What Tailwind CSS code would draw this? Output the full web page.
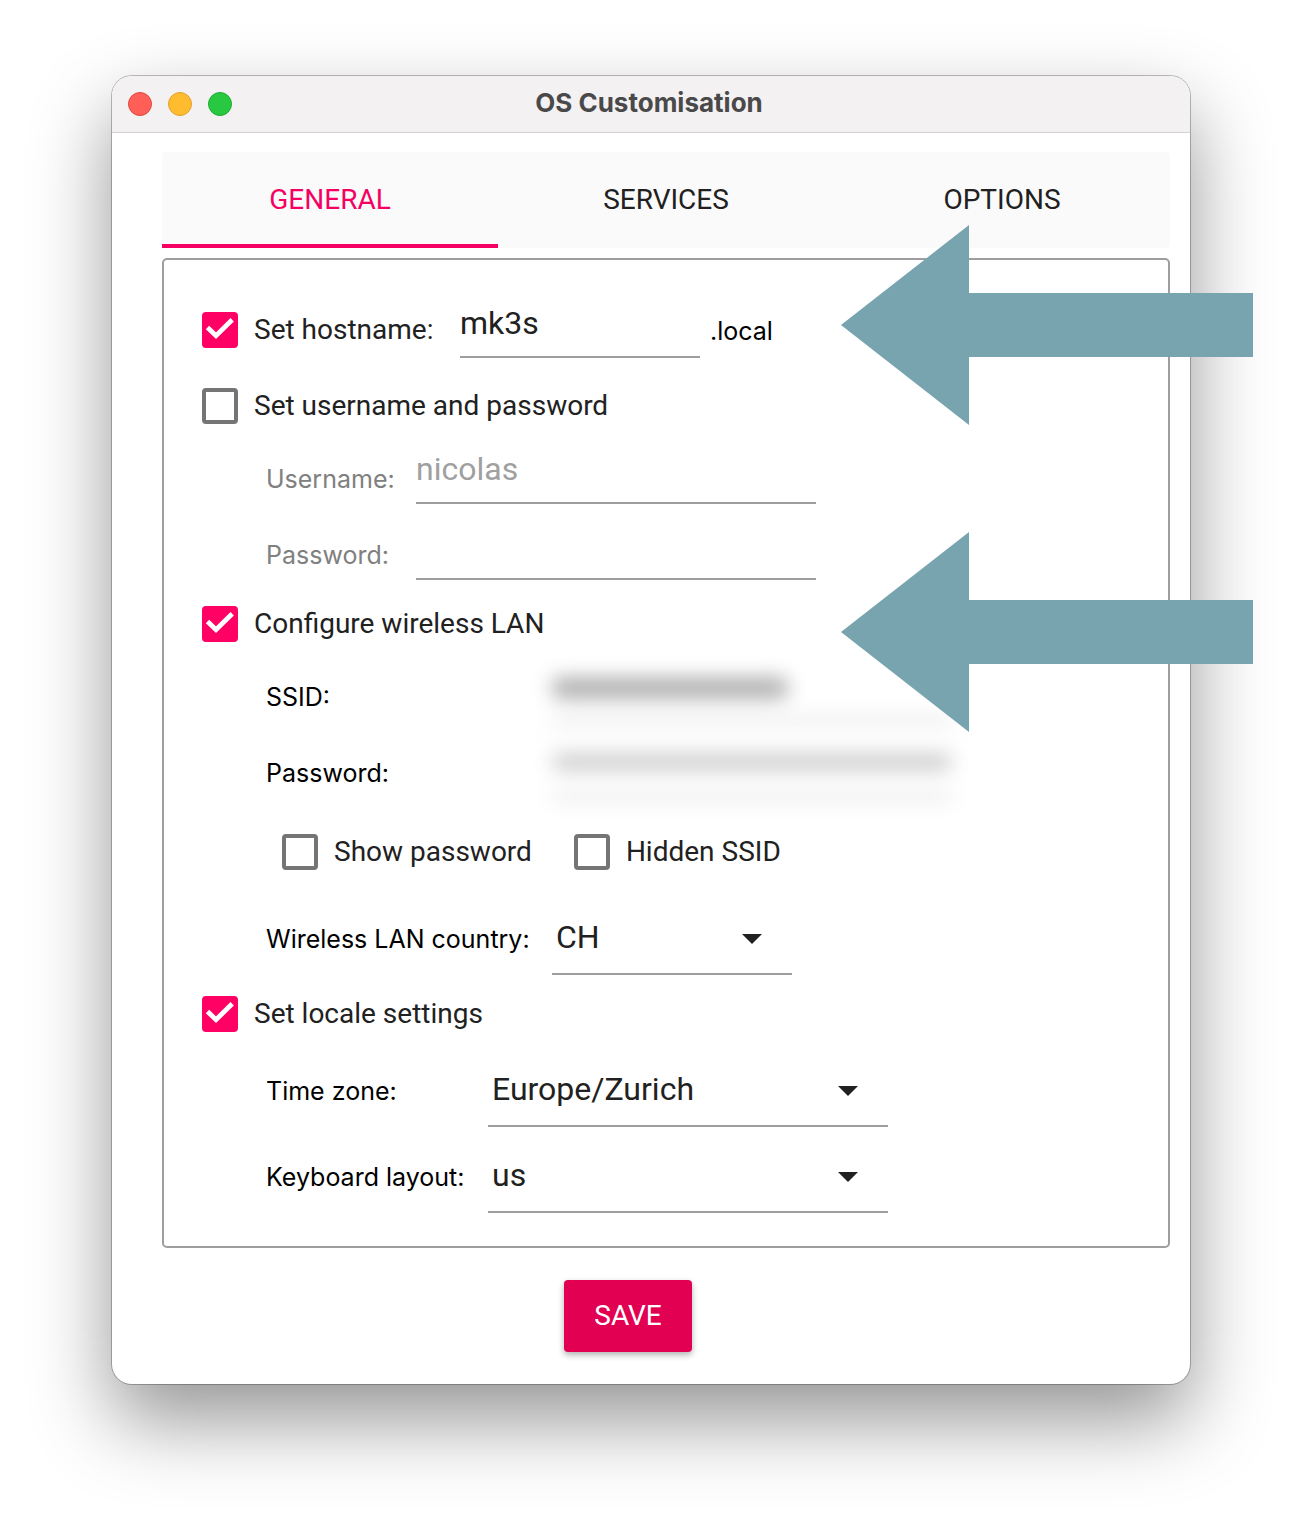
<!DOCTYPE html>
<html lang="en">
<head>
    <meta charset="UTF-8">
    <meta name="viewport" content="width=device-width, initial-scale=1.0">
    <title>OS Customisation</title>
    <script src="https://cdn.jsdelivr.net/npm/@tailwindcss/browser@4"></script>
</head>
<body class="bg-white font-[Roboto,sans-serif] text-[28px] leading-9 text-[#212121]">

    <div class="min-h-screen px-28 pt-[76px] pb-[148px]">
        <div class="relative rounded-[20px] bg-white shadow-[0_0_0_1px_rgba(0,0,0,0.25),0_36px_80px_rgba(0,0,0,0.42)]">

            <!-- Title bar -->
            <header class="relative flex h-[57px] items-center justify-center rounded-t-[20px] border-b border-[#d4d2d3] bg-[#f3f1f2]">
                <div class="absolute left-4 flex gap-4">
                    <button aria-label="Close" class="size-6 rounded-full border border-[#e2463f] bg-[#ff5f57]"></button>
                    <button aria-label="Minimise" class="size-6 rounded-full border border-[#e0a12c] bg-[#febc2e]"></button>
                    <button aria-label="Zoom" class="size-6 rounded-full border border-[#1fab33] bg-[#28c840]"></button>
                </div>
                <h1 class="pr-1 pb-0.5 font-[Inter,sans-serif] text-[26px] font-bold text-[#4a494a]">OS Customisation</h1>
            </header>

            <form class="pt-[19px] pr-5 pb-8 pl-[50px]" onsubmit="return false">
                <!-- Tabs -->
                <div role="tablist" class="grid h-24 grid-cols-3 rounded-sm bg-[#fafafa]">
                    <button type="button" role="tab" aria-selected="true" class="border-y-4 border-t-transparent border-b-[#f50062] text-[#f50062]">GENERAL</button>
                    <button type="button" role="tab" aria-selected="false">SERVICES</button>
                    <button type="button" role="tab" aria-selected="false">OPTIONS</button>
                </div>

                <div role="tabpanel" class="mt-[10px] rounded-[5px] border-2 border-[#9e9e9e] pt-[42px] pb-[33px] pl-[38px]">
                    <!-- Hostname -->
                    <div class="flex h-14 items-center">
                        <label class="flex w-[258px] items-center gap-4">
                            <span class="grid">
                                <input type="checkbox" checked class="peer col-start-1 row-start-1 size-9 appearance-none rounded-sm border-4 border-[#757575] checked:border-[#ff0064] checked:bg-[#ff0064]">
                                <svg class="pointer-events-none invisible col-start-1 row-start-1 size-9 peer-checked:visible" viewBox="0 0 36 36" fill="none" stroke="#fff" stroke-width="4.8"><path d="M5.5 15.500 14 23.700 30.200 7.800"/></svg>
                            </span>
                            Set hostname:
                        </label>
                        <input id="hostname" type="text" value="mk3s" aria-label="Hostname" class="h-14 w-60 border-b-2 border-[#9e9e9e] pb-3 text-[32px] outline-none">
                        <label for="hostname" class="ml-[10px] pt-0.5 font-[Inter,sans-serif] text-[25px] text-black">.local</label>
                    </div>

                    <!-- Username and password -->
                    <label class="mt-[30px] flex w-fit items-center gap-4">
                        <span class="grid">
                            <input type="checkbox" class="peer col-start-1 row-start-1 size-9 appearance-none rounded-sm border-4 border-[#757575] checked:border-[#ff0064] checked:bg-[#ff0064]">
                            <svg class="pointer-events-none invisible col-start-1 row-start-1 size-9 peer-checked:visible" viewBox="0 0 36 36" fill="none" stroke="#fff" stroke-width="4.8"><path d="M5.5 15.500 14 23.700 30.200 7.800"/></svg>
                        </span>
                        Set username and password
                    </label>
                    <div class="mt-6 ml-16 flex h-14 items-center">
                        <label for="username" class="w-[150px] pt-1.5 font-[Inter,sans-serif] text-[25px] text-[#808080]">Username:</label>
                        <input id="username" type="text" value="nicolas" disabled class="h-14 w-[400px] border-b-2 border-[#9e9e9e] pb-3 text-[32px] text-[#a0a0a0]">
                    </div>
                    <div class="mt-5 ml-16 flex h-14 items-center">
                        <label for="user-password" class="w-[150px] pt-1.5 font-[Inter,sans-serif] text-[25px] text-[#808080]">Password:</label>
                        <input id="user-password" type="password" disabled class="h-14 w-[400px] border-b-2 border-[#9e9e9e] pb-3 text-[32px]">
                    </div>

                    <!-- Wireless LAN -->
                    <label class="mt-[26px] flex w-fit items-center gap-4">
                        <span class="grid">
                            <input type="checkbox" checked class="peer col-start-1 row-start-1 size-9 appearance-none rounded-sm border-4 border-[#757575] checked:border-[#ff0064] checked:bg-[#ff0064]">
                            <svg class="pointer-events-none invisible col-start-1 row-start-1 size-9 peer-checked:visible" viewBox="0 0 36 36" fill="none" stroke="#fff" stroke-width="4.8"><path d="M5.5 15.500 14 23.700 30.200 7.800"/></svg>
                        </span>
                        Configure wireless LAN
                    </label>
                    <div class="mt-6 ml-16 flex h-14 items-center">
                        <label for="ssid" class="w-[286px] pt-1.5 font-[Inter,sans-serif] text-[25px] text-black">SSID:</label>
                        <div class="h-14 w-[400px] border-b-2 border-[#9e9e9e] pt-3 blur-[10px]">
                            <input id="ssid" type="text" class="block h-5 w-[236px] rounded-lg bg-[#a8a8a8] outline-none">
                        </div>
                    </div>
                    <div class="mt-5 ml-16 flex h-14 items-center">
                        <label for="wifi-password" class="w-[286px] pt-1.5 font-[Inter,sans-serif] text-[25px] text-black">Password:</label>
                        <div class="h-14 w-[400px] border-b-2 border-[#9e9e9e] pt-3 blur-[10px]">
                            <input id="wifi-password" type="password" class="block h-4 w-full rounded-lg bg-[#c8c8c8] outline-none">
                        </div>
                    </div>
                    <div class="mt-9 ml-20 flex gap-[42px]">
                        <label class="flex items-center gap-4">
                            <span class="grid">
                                <input type="checkbox" class="peer col-start-1 row-start-1 size-9 appearance-none rounded-sm border-4 border-[#757575] checked:border-[#ff0064] checked:bg-[#ff0064]">
                                <svg class="pointer-events-none invisible col-start-1 row-start-1 size-9 peer-checked:visible" viewBox="0 0 36 36" fill="none" stroke="#fff" stroke-width="4.8"><path d="M5.5 15.500 14 23.700 30.200 7.800"/></svg>
                            </span>
                            Show password
                        </label>
                        <label class="flex items-center gap-4">
                            <span class="grid">
                                <input type="checkbox" class="peer col-start-1 row-start-1 size-9 appearance-none rounded-sm border-4 border-[#757575] checked:border-[#ff0064] checked:bg-[#ff0064]">
                                <svg class="pointer-events-none invisible col-start-1 row-start-1 size-9 peer-checked:visible" viewBox="0 0 36 36" fill="none" stroke="#fff" stroke-width="4.8"><path d="M5.5 15.500 14 23.700 30.200 7.800"/></svg>
                            </span>
                            Hidden SSID
                        </label>
                    </div>
                    <div class="mt-[33px] ml-16 flex items-center">
                        <label for="country" class="w-[286px] font-[Inter,sans-serif] text-[25px] text-black">Wireless LAN country:</label>
                        <div class="relative w-60">
                            <select id="country" class="block h-[72px] w-full appearance-none border-b-2 border-[#9e9e9e] pb-0.5 pl-1 text-[32px] outline-none">
                                <option>CH</option>
                            </select>
                            <svg class="pointer-events-none absolute top-[31px] right-[30px] h-[10px] w-5" viewBox="0 0 20 10" fill="#212121"><path d="M0 0h20L10 10z"/></svg>
                        </div>
                    </div>

                    <!-- Locale -->
                    <label class="mt-[21px] flex w-fit items-center gap-4">
                        <span class="grid">
                            <input type="checkbox" checked class="peer col-start-1 row-start-1 size-9 appearance-none rounded-sm border-4 border-[#757575] checked:border-[#ff0064] checked:bg-[#ff0064]">
                            <svg class="pointer-events-none invisible col-start-1 row-start-1 size-9 peer-checked:visible" viewBox="0 0 36 36" fill="none" stroke="#fff" stroke-width="4.8"><path d="M5.5 15.500 14 23.700 30.200 7.800"/></svg>
                        </span>
                        Set locale settings
                    </label>
                    <div class="mt-[23px] ml-16 flex items-center">
                        <label for="timezone" class="w-[222px] font-[Inter,sans-serif] text-[25px] text-black">Time zone:</label>
                        <div class="relative w-[400px]">
                            <select id="timezone" class="block h-[72px] w-full appearance-none border-b-2 border-[#9e9e9e] pb-0.5 pl-1 text-[32px] outline-none">
                                <option>Europe/Zurich</option>
                            </select>
                            <svg class="pointer-events-none absolute top-[31px] right-[30px] h-[10px] w-5" viewBox="0 0 20 10" fill="#212121"><path d="M0 0h20L10 10z"/></svg>
                        </div>
                    </div>
                    <div class="mt-[14px] ml-16 flex items-center">
                        <label for="keyboard" class="w-[222px] font-[Inter,sans-serif] text-[25px] text-black">Keyboard layout:</label>
                        <div class="relative w-[400px]">
                            <select id="keyboard" class="block h-[72px] w-full appearance-none border-b-2 border-[#9e9e9e] pb-0.5 pl-1 text-[32px] outline-none">
                                <option>us</option>
                            </select>
                            <svg class="pointer-events-none absolute top-[31px] right-[30px] h-[10px] w-5" viewBox="0 0 20 10" fill="#212121"><path d="M0 0h20L10 10z"/></svg>
                        </div>
                    </div>
                </div>

                <div class="mt-8 flex justify-center pr-[76px]">
                    <button type="submit" class="h-[72px] w-32 rounded-sm bg-[#e20053] text-white shadow-[0_3px_6px_rgba(0,0,0,0.3)]">SAVE</button>
                </div>
            </form>

            <!-- Pointer arrows -->
            <svg class="pointer-events-none absolute top-[149px] -right-[63px] h-[200px] w-[412px]" viewBox="0 0 412 200" fill="#78a4af"><path d="M0 100 128 0v68h284v64H128v68z"/></svg>
            <svg class="pointer-events-none absolute top-[456px] -right-[63px] h-[200px] w-[412px]" viewBox="0 0 412 200" fill="#78a4af"><path d="M0 100 128 0v68h284v64H128v68z"/></svg>
        </div>
    </div>

</body>
</html>
